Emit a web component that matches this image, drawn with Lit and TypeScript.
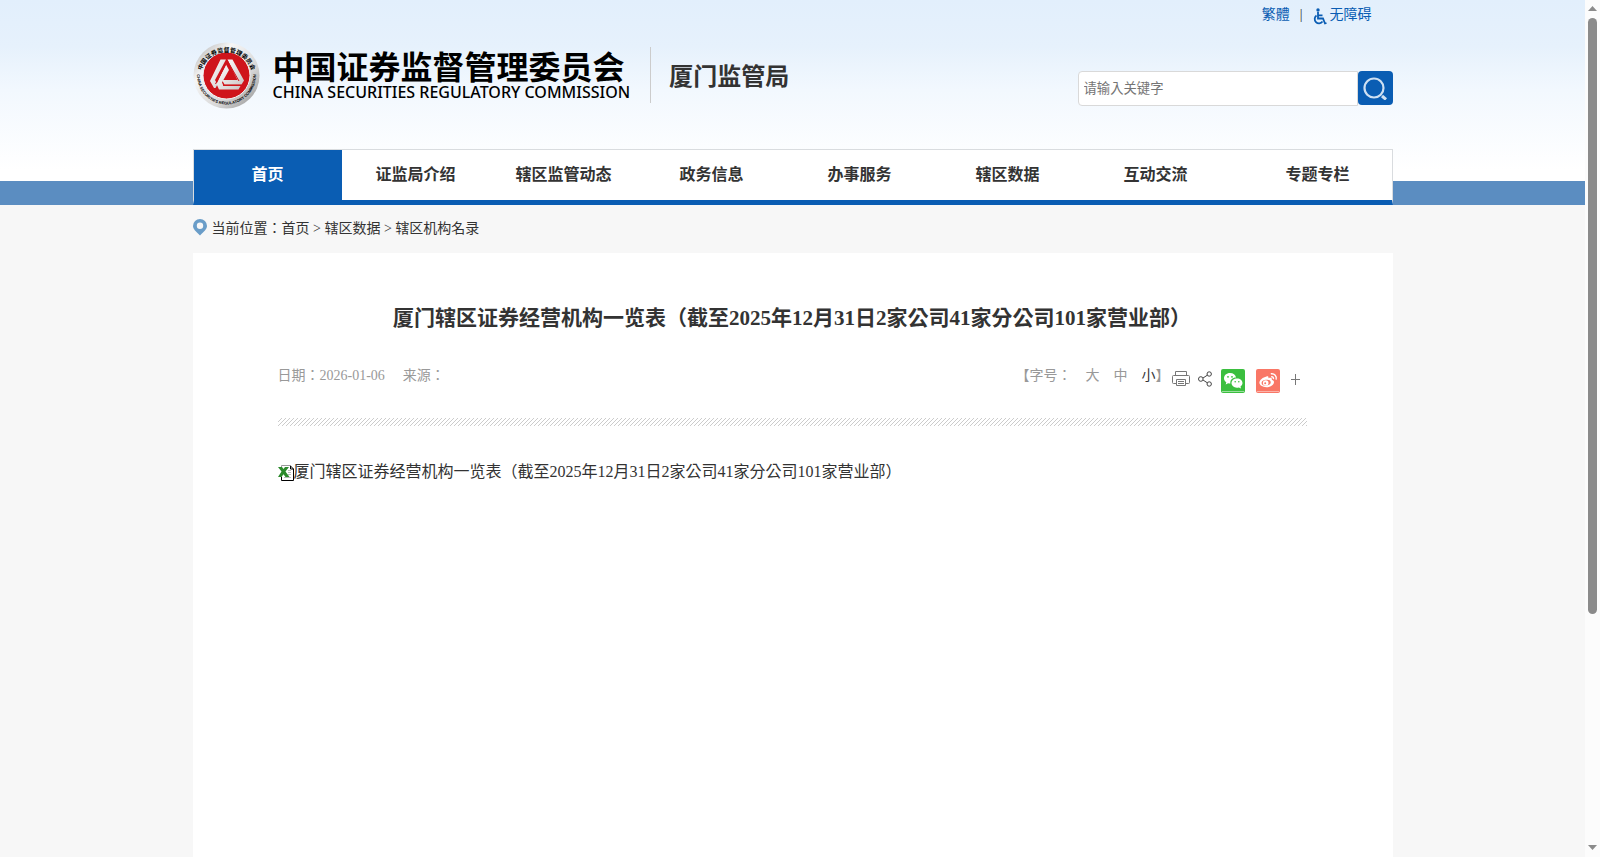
import { LitElement, html, css } from "lit";
import { customElement, state } from "lit/decorators.js";

const NAV_ITEMS = ["首页", "证监局介绍", "辖区监管动态", "政务信息", "办事服务", "辖区数据", "互动交流", "专题专栏"];
const CRUMBS = ["首页", "辖区数据", "辖区机构名录"];
const FONT_SIZES = ["大", "中", "小"];
const TITLE = "厦门辖区证券经营机构一览表（截至2025年12月31日2家公司41家分公司101家营业部）";

@customElement("csrc-emblem")
export class CsrcEmblem extends LitElement {
  static styles = css`
    :host { display: block; }
    svg { display: block; overflow: visible; }
    .ring-cn { font: bold 6px "Noto Sans CJK SC", sans-serif; }
    .ring-en { font: bold 4px "Liberation Sans", sans-serif; }
  `;

  render() {
    return html`
      <svg width="67" height="67" viewBox="0 0 67 67" role="img" aria-label="中国证监会">
        <defs>
          <linearGradient id="metal" x1="0" y1="0" x2="1" y2="1">
            <stop offset="0" stop-color="#a9a9a9"/>
            <stop offset=".3" stop-color="#f6f6f6"/>
            <stop offset=".65" stop-color="#d8d8d8"/>
            <stop offset="1" stop-color="#8c8c8c"/>
          </linearGradient>
          <linearGradient id="steel" x1="0" y1="0" x2="1" y2="1">
            <stop offset="0" stop-color="#fff"/>
            <stop offset="1" stop-color="#cdc6c6"/>
          </linearGradient>
          <path id="arc-top" d="M7.500 36a26 26 0 1 1 52 0"/>
          <path id="arc-low" d="M4 33a29.500 29.500 0 0 0 59 0"/>
        </defs>
        <circle cx="33.500" cy="33.500" r="33" fill="url(#metal)"/>
        <circle cx="33.500" cy="33.500" r="23.500" fill="#cf141b" stroke="#f4f4f4"/>
        <text class="ring-cn"><textPath href="#arc-top" startOffset="50%" text-anchor="middle">中国证券监督管理委员会</textPath></text>
        <text class="ring-en"><textPath href="#arc-low" startOffset="50%" text-anchor="middle">CHINA SECURITIES REGULATORY COMMISSION</textPath></text>
        <path fill="url(#steel)" d="M27.500 17.500H33L22 38l2.500 4.500L22.500 46 21 46l-4-7z"/>
        <path fill="url(#steel)" d="M34.500 17.500h5L51 38.500l-2.500 4H31.500l-2.500-4.500h15.500z"/>
        <path fill="url(#steel)" d="M33 22.500l3 5.500-7 12.500 1.500 3.500h17l-2 3.500H26L23.500 42z"/>
        <path fill="none" stroke="#cf141b" stroke-width="1" d="M34 18l12 21M30 43.300h19M33 22L22.500 42"/>
      </svg>
    `;
  }
}

@customElement("app-root")
export class AppRoot extends LitElement {
  static styles = css`
    :host {
      display: flex;
      height: 100vh;
      overflow: hidden;
      background: #f7f7f7;
      color: #333;
      font: 14px/20px "Liberation Serif", "Noto Sans CJK TC", serif;
    }
    *, *::before, *::after { box-sizing: border-box; }
    a { color: inherit; text-decoration: none; }
    svg { display: block; flex: none; }
    button { font: inherit; color: inherit; background: none; border: 0; padding: 0; cursor: pointer; }
    .page { flex: 1; min-width: 0; display: flex; flex-direction: column; }
    .wrap { width: 100%; max-width: 1200px; margin: 0 auto; }

    .header {
      background: linear-gradient(#5b8dc1, #5b8dc1) bottom / 100% 24px no-repeat,
        linear-gradient(#e2effc 0, #e6f1fc 46px, #f2f8fe 90px, #fff 170px);
    }
    .top-links {
      display: flex; justify-content: flex-end; align-items: center;
      gap: 10px; height: 30px; padding-right: 21px; color: #0a5db3;
    }
    .top-links .bar { color: #333; }
    .access { display: flex; align-items: center; gap: 3px; }
    .access svg { margin-top: 2px; }
    .brand-row { display: flex; align-items: center; height: 90px; margin-bottom: 29px; }
    .brand { display: flex; align-items: center; gap: 13px; color: #000; }
    .brand-cn { font: bold 32px/34px "Noto Sans CJK SC", sans-serif; }
    .brand-en { font: 500 16px/20px "Noto Sans", sans-serif; white-space: nowrap; }
    .bureau {
      display: flex; align-items: center; height: 56px;
      margin: 0 0 0 20px; padding: 4px 0 0 18px; border-left: 1px solid #ccc;
      font-size: 24px; line-height: 32px; font-weight: bold;
    }
    .search { display: flex; margin: 27px 0 0 auto; }
    .search input {
      width: 280px; height: 35px; padding: 0 5px; margin: 0;
      border: 1px solid #d9d9d9; border-radius: 4px 0 0 4px; background: #fff;
      font-family: "Liberation Serif", "Noto Sans CJK TC", serif; color: #333; outline: 0;
    }
    .search input::placeholder { color: #757575; }
    .search button {
      width: 35px; height: 34px; border-radius: 4px; background: #0a5db3;
      display: grid; place-items: center;
    }

    .nav {
      display: flex; height: 56px; background: #fff;
      border: 1px solid #d9dcdf; border-bottom: 5px solid #0a5db3;
    }
    .nav a {
      width: 148px; text-align: center; font-size: 16px; line-height: 50px; font-weight: bold;
    }
    .nav a:last-child { margin-left: auto; }
    .nav a.active { background: #0a5db3; color: #fff; }

    .crumbs { display: flex; align-items: center; gap: 5px; height: 48px; }

    .article { flex: 1 0 auto; background: #fff; padding: 48px 86px 48px 85px; }
    .title { margin: 0; font-size: 21px; line-height: 34px; text-align: center; }
    .meta { display: flex; justify-content: space-between; margin-top: 31px; height: 52px; color: #999; }
    .facts { display: flex; gap: 18px; }
    .tools { display: flex; align-items: flex-start; }
    .sizes { display: flex; gap: 14px; }
    .sizes .on { color: #333; }
    .share { display: flex; align-items: center; height: 26px; padding: 0 7px 0 2px; }
    .print { margin-right: 8px; }
    .nodes { margin-right: 9px; }
    .social { margin: 3px 11px 0 0; }
    .stripe {
      height: 8px;
      background: linear-gradient(135deg, transparent 40%, #ccc 40% 60%, transparent 60%) 0 0 / 4px 4px;
    }
    .attachment { display: flex; align-items: center; margin-top: 36px; font-size: 16px; line-height: 20px; }
    .attachment svg { margin-top: 2px; }

    .scrollbar {
      width: 15px; display: flex; flex-direction: column; align-items: center;
      padding: 6px 0 7px; background: #fcfcfc;
    }
    .track { flex: 1; padding: 7px 0 11px; }
    .thumb { width: 9px; height: 73%; border-radius: 5px; background: #8b8b8b; }
  `;

  @state() private fontSize = "小";

  render() {
    return html`
      <div class="page">
        <header class="header">
          <div class="wrap">
            <div class="top-links">
              <a href="#">繁體</a>
              <span class="bar">|</span>
              <a class="access" href="#">
                <svg width="14" height="17" viewBox="0 0 14 17" fill="none" stroke="#0a5db3" stroke-width="1.800">
                  <circle cx="5" cy="2" r="1.700" fill="#0a5db3" stroke="none"/>
                  <path d="M5 4v6.500h5l2 5 1.500-.5M5 7.300h4.500M3.500 7.500a4.300 4.300 0 1 0 6 6"/>
                </svg>
                无障碍
              </a>
            </div>
            <div class="brand-row">
              <a class="brand" href="#">
                <csrc-emblem></csrc-emblem>
                <div>
                  <div class="brand-cn">中国证券监督管理委员会</div>
                  <div class="brand-en">CHINA SECURITIES REGULATORY COMMISSION</div>
                </div>
              </a>
              <h2 class="bureau">厦门监管局</h2>
              <form class="search" @submit=${(e: Event) => e.preventDefault()}>
                <input type="text" aria-label="请输入关键字" placeholder="请输入关键字">
                <button type="submit" aria-label="搜索">
                  <svg width="24" height="24" viewBox="0 0 24 24" fill="none" stroke="#cfe0f2">
                    <circle cx="11" cy="12" r="9.500" stroke-width="2.200"/>
                    <path d="M19 20l4 3.500" stroke-width="3"/>
                  </svg>
                </button>
              </form>
            </div>
            <nav class="nav">
              ${NAV_ITEMS.map((label, i) => html`<a class=${i === 0 ? "active" : ""} href="#">${label}</a>`)}
            </nav>
          </div>
        </header>

        <nav class="wrap crumbs" aria-label="当前位置">
          <svg width="14" height="20" viewBox="0 0 14 20">
            <path fill="#6a9dc8" fill-rule="evenodd" d="M7 0a7 7 0 0 1 7 7c0 3-3 5.500-7 9.500C3 12.500 0 10 0 7a7 7 0 0 1 7-7zm0 3.500a3.200 3.200 0 1 0 0 6.400 3.200 3.200 0 0 0 0-6.400z"/>
          </svg>
          <span>当前位置：${CRUMBS.map((c, i) => html`${i ? " > " : ""}<a href="#">${c}</a>`)}</span>
        </nav>

        <main class="wrap article">
          <h1 class="title">${TITLE}</h1>
          <div class="meta">
            <div class="facts"><span>日期：2026-01-06</span><span>来源：</span></div>
            <div class="tools">
              <div class="sizes">
                <span>【字号：</span>
                ${FONT_SIZES.map((s) => html`<button class=${s === this.fontSize ? "on" : ""} @click=${() => (this.fontSize = s)}>${s}</button>`)}
              </div>
              <span>】</span>
              <div class="share">
                <button class="print" aria-label="打印">
                  <svg width="18" height="16" viewBox="0 0 18 16" fill="none" stroke="#777">
                    <path d="M3.500 4.500v-4h11v4M4 12.500H1.500a1 1 0 0 1-1-1v-6a1 1 0 0 1 1-1h15a1 1 0 0 1 1 1v6a1 1 0 0 1-1 1H14M4.500 8.500h9v6h-9zM6 10.500h6M6 12.500h6"/>
                  </svg>
                </button>
                <button class="nodes" aria-label="分享">
                  <svg width="14" height="16" viewBox="0 0 14 16" fill="none" stroke="#444">
                    <circle cx="2.800" cy="8" r="2.300"/><circle cx="11.200" cy="3" r="2.200"/><circle cx="11.200" cy="13" r="2.200"/>
                    <path d="M5 7l4.300-2.800M5 9l4.300 2.800"/>
                  </svg>
                </button>
                <button class="social" aria-label="微信">
                  <svg width="24" height="24" viewBox="0 0 24 24">
                    <rect width="24" height="24" rx="2" fill="#3bbf3f"/>
                    <path d="M1 22.500h22" stroke="#b4e6b6" stroke-width=".8"/>
                    <path fill="#fff" d="M9 4c-3.500 0-6 2.300-6 5.200 0 1.700.9 3.100 2.300 4.100L4.700 15.500l2.400-1.300c.8.200 1.500.3 2.300.3-.5-3.300 2-5.900 5.700-5.900C14.600 6 12.200 4 9 4z"/>
                    <path fill="#fff" d="M16 9.500c3.200 0 5.500 2 5.500 4.600 0 1.500-.8 2.700-2 3.500l.5 2-2.100-1.100c-4.100 1.100-7.400-1.300-7.400-4.400 0-2.600 2.400-4.600 5.500-4.600z"/>
                    <g fill="#3bbf3f"><circle cx="7" cy="7.800" r=".9"/><circle cx="11" cy="7.800" r=".9"/><circle cx="14.200" cy="12.800" r=".8"/><circle cx="17.800" cy="12.800" r=".8"/></g>
                  </svg>
                </button>
                <button class="social" aria-label="微博">
                  <svg width="24" height="24" viewBox="0 0 24 24" fill="none">
                    <rect width="24" height="24" rx="2" fill="#f97766"/>
                    <path d="M1 22.500h22" stroke="#fcc3bb" stroke-width=".8"/>
                    <path fill="#fff" d="M10.500 7.500c1.500-.5 2.300.2 1.900 1.700 2.200-.9 3.900-.4 3.400 1.600 1.400.4 2.200 1.200 2.200 2.400 0 2.500-3.600 5-7.600 5-4 0-7-1.900-7-4.600 0-2.500 3.500-5.300 7.100-6.100z"/>
                    <ellipse cx="10.200" cy="13.700" rx="4.600" ry="2.900" transform="rotate(-8 10 14)" fill="#f97766"/>
                    <circle cx="9.700" cy="14" r="2.800" fill="#fff"/><circle cx="9.200" cy="14.300" r="1" fill="#f97766"/>
                    <path d="M15.200 7.800c1.600-.3 2.600.8 2.200 2.400M14.800 4.800c3.700-.6 6.300 2.300 5.300 5.800" stroke="#fff" stroke-width="1.400"/>
                  </svg>
                </button>
                <button aria-label="更多">
                  <svg width="9" height="11" viewBox="0 0 9 11" stroke="#777"><path d="M4.500 0v11M0 5.500h9"/></svg>
                </button>
              </div>
            </div>
          </div>
          <div class="stripe"></div>
          <a class="attachment" href="#">
            <svg width="16" height="16" viewBox="0 0 16 16">
              <path d="M3.500 .5h9.500l2.500 2.500v12.500h-12z" fill="#fff"/>
              <path d="M3.500 3V.5H13" fill="none" stroke="#999"/>
              <path d="M12.500 1l3 3v11.500h-12V12M12.500 1v3h3" fill="none" stroke="#000"/>
              <path d="M10 5.500h3M10 7.500h3M10 9.500h3M6 12.500h7" stroke="#bbb"/>
              <path d="M0 2h4l1.500 2L7 2h4L7.500 6.500 11.500 12h-4L5.500 9.200 3.500 12H0l3.500-5.500z" fill="#2c8a2c"/>
            </svg>
            <span>${TITLE}</span>
          </a>
        </main>
      </div>
      <div class="scrollbar" aria-hidden="true">
        <svg width="9" height="5" viewBox="0 0 9 5"><path fill="#8b8b8b" d="M4.500 0L9 5H0z"/></svg>
        <div class="track"><div class="thumb"></div></div>
        <svg width="9" height="5" viewBox="0 0 9 5"><path fill="#8b8b8b" d="M0 0h9L4.500 5z"/></svg>
      </div>
    `;
  }
}
